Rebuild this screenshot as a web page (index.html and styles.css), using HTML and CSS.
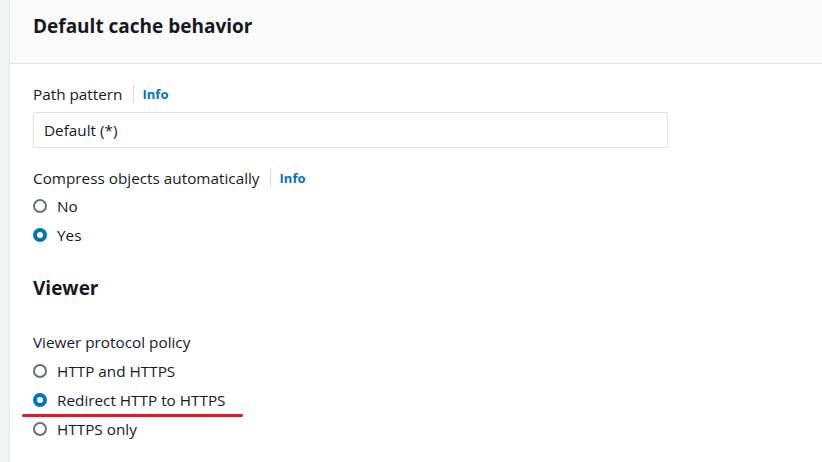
FILE: index.html
```html
<!DOCTYPE html>
<html>
<head>
<meta charset="utf-8">
<link rel="stylesheet" href="styles.css">
</head>
<body>
<div class="page">
  <div class="gutter"></div>
  <div class="panel">
    <div class="panel-header"><h2>Default cache behavior</h2></div>
    <div class="panel-body">
      <div class="field">
        <div class="label">Path pattern<span class="sep"></span><a class="info">Info</a></div>
        <div class="input">Default (*)</div>
      </div>
      <div class="field">
        <div class="label">Compress objects automatically<span class="sep"></span><a class="info">Info</a></div>
        <div class="radios">
          <div class="radio"><span class="dot"></span>No</div>
          <div class="radio"><span class="dot on"></span>Yes</div>
        </div>
      </div>
      <h3>Viewer</h3>
      <div class="field">
        <div class="label">Viewer protocol policy</div>
        <div class="radios radios-viewer">
          <div class="radio"><span class="dot"></span>HTTP and HTTPS</div>
          <div class="radio marked"><span class="dot on"></span>Redirect HTTP to HTTPS</div>
          <div class="radio"><span class="dot"></span>HTTPS only</div>
        </div>
      </div>
    </div>
  </div>
</div>
</body>
</html>
```

FILE: styles.css
```css
* { box-sizing: border-box; }
html, body { margin: 0; padding: 0; background: #fff; }
body {
  font-family: "Open Sans", "Noto Sans", sans-serif;
  font-size: 15.3px;
  color: #16191f;
  width: 822px;
  height: 462px;
  overflow: hidden;
}
.page { display: flex; height: 462px; }
.gutter {
  width: 10px;
  background: #f2f3f3;
  border-right: 1px solid #e4e6e6;
  flex: none;
}
.panel { flex: 1; background: #fff; }
.panel-header {
  height: 64px;
  background: #fafafa;
  border-bottom: 1px solid #e6e6e6;
  padding: 0 0 0 23px;
  display: flex;
  align-items: center;
}
h2 {
  margin: 0;
  font-size: 19px;
  font-weight: 700;
  position: relative;
  top: -6px;
}
.panel-body { padding: 18px 0 0 23px; }
.field { margin-bottom: 18px; }
.label {
  display: flex;
  align-items: center;
  height: 24px;
  line-height: 24px;
}
.sep {
  width: 1px;
  height: 18px;
  background: #d5dbdb;
  margin: 0 9px 0 10px;
}
.info {
  color: #0073bb;
  font-weight: 700;
  font-size: 13px;
}
.input {
  margin-top: 6px;
  width: 635px;
  height: 36px;
  border: 1px solid #e3e3e3;
  border-radius: 2px;
  padding: 0 10px;
  display: flex;
  align-items: center;
}
.radios { margin-top: 1px; }
.radios-viewer { margin-top: 2px; }
.radio {
  display: flex;
  align-items: center;
  height: 29px;
  position: relative;
}
.dot {
  width: 14px;
  height: 14px;
  border: 2px solid #687078;
  border-radius: 50%;
  margin-right: 10px;
  flex: none;
}
.dot.on {
  border: 4px solid #0073bb;
  background: #fff;
}
.marked::after {
  content: "";
  position: absolute;
  left: -11px;
  top: 29px;
  width: 221px;
  height: 3px;
  background: #e3191f;
  border-radius: 2px;
}
h3 {
  margin: 27px 0 30px;
  font-size: 19px;
  font-weight: 700;
  line-height: 24px;
}
```
